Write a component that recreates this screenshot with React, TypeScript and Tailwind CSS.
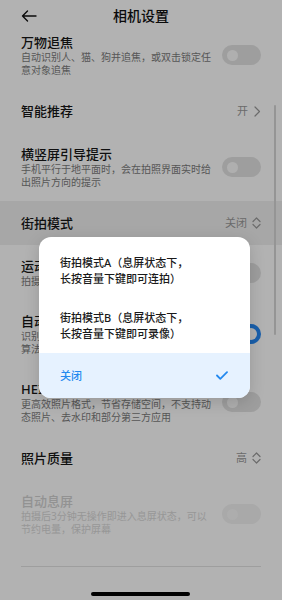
import React from "react";

type Row = {
  title: string;
  sub?: string[];
  right?: "toggle" | "toggleOn" | "toggleDisabled" | "value" | "select";
  value?: string;
  disabled?: boolean;
  active?: boolean;
};

const rows: Row[] = [
  { title: "万物追焦", sub: ["自动识别人、猫、狗并追焦，或双击锁定任", "意对象追焦"], right: "toggle" },
  { title: "智能推荐", right: "value", value: "开" },
  { title: "横竖屏引导提示", sub: ["手机平行于地平面时，会在拍照界面实时给", "出照片方向的提示"], right: "toggle" },
  { title: "街拍模式", right: "select", value: "关闭", active: true },
  { title: "运动抓拍", sub: ["拍摄运动物体时自动提升快门速度"], right: "toggle" },
  { title: "自动场景识别", sub: ["识别夜景、人像等场景，自动调用对应的", "算法优化画质"], right: "toggleOn" },
  { title: "HEIF格式", sub: ["更高效照片格式，节省存储空间，不支持动", "态照片、去水印和部分第三方应用"], right: "toggle" },
  { title: "照片质量", right: "select", value: "高" },
  { title: "自动息屏", sub: ["拍摄后3分钟无操作即进入息屏状态，可以", "节约电量，保护屏幕"], right: "toggleDisabled", disabled: true },
];

function Toggle({ on, disabled }: { on?: boolean; disabled?: boolean }) {
  if (on) {
    return (
      <div className="w-[39px] h-[20px] rounded-full bg-[#2589f5] flex items-center justify-end px-[4px]">
        <div className="w-[12px] h-[12px] rounded-full bg-white" />
      </div>
    );
  }
  return (
    <div
      className={`w-[39px] h-[20px] rounded-full flex items-center px-[5px] ${
        disabled ? "bg-[#f2f2f2]" : "bg-[#e3e3e3]"
      }`}
    >
      <div className={`w-[11px] h-[11px] rounded-full ${disabled ? "bg-[#f8f8f8]" : "bg-[#fbfbfb]"}`} />
    </div>
  );
}

function ChevronRight() {
  return (
    <svg width="7" height="11" viewBox="0 0 7 11" fill="none">
      <path d="M1 1l4.5 4.5L1 10" stroke="#9a9a9a" strokeWidth="1.2" strokeLinecap="round" strokeLinejoin="round" />
    </svg>
  );
}

function UpDown() {
  return (
    <svg width="9" height="12" viewBox="0 0 9 12" fill="none">
      <path d="M1 4.5L4.5 1 8 4.5M1 7.5L4.5 11 8 7.5" stroke="#9a9a9a" strokeWidth="1.2" strokeLinecap="round" strokeLinejoin="round" />
    </svg>
  );
}

function SettingRow({ row }: { row: Row }) {
  return (
    <div
      className={`flex items-center px-[21px] ${row.sub ? "py-3" : "h-[44px]"} ${
        row.active ? "bg-[#efefef]" : ""
      }`}
    >
      <div className="flex-1 min-w-0">
        <div
          className={`text-[13px] leading-[18px] font-medium ${
            row.disabled ? "text-[#d2d2d2]" : "text-[#161616]"
          }`}
        >
          {row.title}
        </div>
        {row.sub &&
          row.sub.map((line) => (
            <div
              key={line}
              className={`text-[10px] leading-[13px] whitespace-nowrap ${
                row.disabled ? "text-[#d8d8d8]" : "text-[#7c7c7c]"
              }`}
            >
              {line}
            </div>
          ))}
      </div>
      {row.right === "toggle" && <Toggle />}
      {row.right === "toggleOn" && <Toggle on />}
      {row.right === "toggleDisabled" && <Toggle disabled />}
      {row.right === "value" && (
        <div className="flex items-center gap-[6px] text-[11px] text-[#999]">
          <span>{row.value}</span>
          <ChevronRight />
        </div>
      )}
      {row.right === "select" && (
        <div className="flex items-center gap-[5px] text-[11px] text-[#999]">
          <span>{row.value}</span>
          <UpDown />
        </div>
      )}
    </div>
  );
}

export default function App() {
  return (
    <div
      className="relative w-[282px] h-[600px] overflow-hidden bg-white flex flex-col"
      style={{ fontFamily: '"Noto Sans", "Noto Sans CJK SC", sans-serif' }}
    >
      {/* header */}
      <div className="h-[37px] shrink-0 bg-white flex items-start pt-[6px] px-[21px]">
        <svg width="16" height="12" viewBox="0 0 16 12" fill="none" className="mt-[4px]">
          <path d="M15 6H1.5M6.5 1L1.5 6l5 5" stroke="#111" strokeWidth="1.4" strokeLinecap="round" strokeLinejoin="round" />
        </svg>
        <div className="flex-1 text-center text-[14px] leading-[20px] font-medium text-[#111] pr-[16px]">相机设置</div>
      </div>

      {/* list, scrolled a little */}
      <div className="flex-1 overflow-hidden">
        <div className="-mt-[16px]">
          {rows.map((r) => (
            <SettingRow key={r.title} row={r} />
          ))}
          <div className="mt-[18px] mx-[21px] h-px bg-[#e3e3e3]" />
        </div>
      </div>

      {/* scroll indicator */}
      <div className="absolute right-[6px] top-[105px] w-[2px] h-[230px] rounded-full bg-[#d6d6d6]" />

      {/* home indicator */}
      <div className="absolute bottom-[4px] left-[91px] w-[99px] h-[4px] rounded-full bg-black" />

      {/* scrim */}
      <div className="absolute inset-0 bg-black/30" />

      {/* dropdown */}
      <div className="absolute top-[237px] left-[39px] w-[211px] rounded-[12px] bg-white overflow-hidden shadow-[0_4px_16px_rgba(0,0,0,0.15)] text-[11px] leading-[16px] font-medium text-[#1a1a1a]">
        <div className="px-[21px] pt-[18px] pb-[11px]">
          <div>街拍模式A（息屏状态下，</div>
          <div>长按音量下键即可连拍）</div>
        </div>
        <div className="px-[21px] pt-[12px] pb-[11px]">
          <div>街拍模式B（息屏状态下，</div>
          <div>长按音量下键即可录像）</div>
        </div>
        <div className="h-[45px] bg-[#e6f2ff] flex items-center justify-between pl-[21px] pr-[22px] text-[#2389ef]">
          <span>关闭</span>
          <svg width="12" height="9" viewBox="0 0 12 9" fill="none">
            <path d="M1 4.5L4.3 7.8 11 1.2" stroke="#2389ef" strokeWidth="1.8" strokeLinecap="round" strokeLinejoin="round" />
          </svg>
        </div>
      </div>
    </div>
  );
}
